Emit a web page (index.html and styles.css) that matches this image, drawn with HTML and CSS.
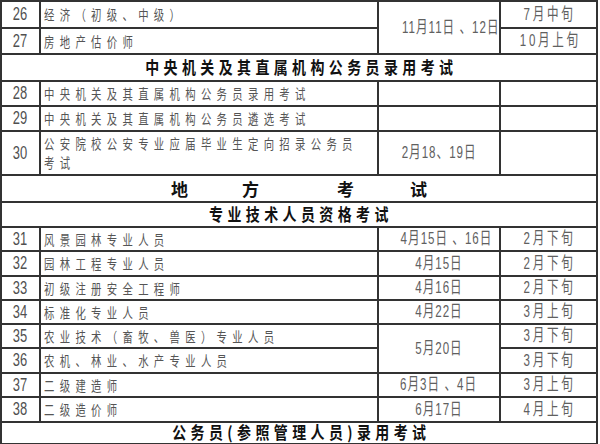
FILE: index.html
```html
<!DOCTYPE html>
<html lang="zh">
<head>
<meta charset="utf-8">
<link rel="stylesheet" href="styles.css">
</head>
<body>
<table class="sched">
<colgroup><col class="c1"><col class="c2"><col class="c3"><col class="c4"></colgroup>
<tbody>
<tr class="h27"><td class="num"><span class="n">26</span></td><td class="name"><span class="t">经济（初级、中级）</span></td><td class="date" rowspan="2"><span class="d">11月11日 、12日</span></td><td class="reg"><span class="d r">7月中旬</span></td></tr>
<tr class="h26"><td class="num"><span class="n">27</span></td><td class="name"><span class="t">房地产估价师</span></td><td class="reg"><span class="d r">10月上旬</span></td></tr>
<tr class="h27"><td class="head" colspan="4"><span class="b">中央机关及其直属机构公务员录用考试</span></td></tr>
<tr class="h25"><td class="num"><span class="n">28</span></td><td class="name"><span class="t">中央机关及其直属机构公务员录用考试</span></td><td class="date"></td><td class="reg"></td></tr>
<tr class="h25"><td class="num"><span class="n">29</span></td><td class="name"><span class="t">中央机关及其直属机构公务员遴选考试</span></td><td class="date"></td><td class="reg"></td></tr>
<tr class="h44"><td class="num"><span class="n">30</span></td><td class="name"><span class="t two">公安院校公安专业应届毕业生定向招录公务员<br>考试</span></td><td class="date"><span class="d">2月18、19日</span></td><td class="reg"></td></tr>
<tr class="h27"><td class="head" colspan="4"><div class="spread"><span>地</span><span>方</span><span>考</span><span>试</span></div></td></tr>
<tr class="h25"><td class="head" colspan="4"><span class="b">专业技术人员资格考试</span></td></tr>
<tr class="h24"><td class="num"><span class="n">31</span></td><td class="name"><span class="t">风景园林专业人员</span></td><td class="date"><span class="d">4月15日 、16日</span></td><td class="reg"><span class="d r">2月下旬</span></td></tr>
<tr class="h25"><td class="num"><span class="n">32</span></td><td class="name"><span class="t">园林工程专业人员</span></td><td class="date"><span class="d">4月15日</span></td><td class="reg"><span class="d r">2月下旬</span></td></tr>
<tr class="h24"><td class="num"><span class="n">33</span></td><td class="name"><span class="t">初级注册安全工程师</span></td><td class="date"><span class="d">4月16日</span></td><td class="reg"><span class="d r">2月下旬</span></td></tr>
<tr class="h24"><td class="num"><span class="n">34</span></td><td class="name"><span class="t">标准化专业人员</span></td><td class="date"><span class="d">4月22日</span></td><td class="reg"><span class="d r">3月上旬</span></td></tr>
<tr class="h24"><td class="num"><span class="n">35</span></td><td class="name"><span class="t">农业技术（畜牧、兽医）专业人员</span></td><td class="date" rowspan="2"><span class="d">5月20日</span></td><td class="reg"><span class="d r">3月下旬</span></td></tr>
<tr class="h25"><td class="num"><span class="n">36</span></td><td class="name"><span class="t">农机、林业、水产专业人员</span></td><td class="reg"><span class="d r">3月下旬</span></td></tr>
<tr class="h24"><td class="num"><span class="n">37</span></td><td class="name"><span class="t">二级建造师</span></td><td class="date"><span class="d">6月3日 、4日</span></td><td class="reg"><span class="d r">3月上旬</span></td></tr>
<tr class="h25"><td class="num"><span class="n">38</span></td><td class="name"><span class="t">二级造价师</span></td><td class="date"><span class="d">6月17日</span></td><td class="reg"><span class="d r">4月上旬</span></td></tr>
<tr class="h21"><td class="head" colspan="4"><span class="b">公务员(参照管理人员)录用考试</span></td></tr>
</tbody>
</table>
</body>
</html>
```
FILE: styles.css
```css
html, body {
  margin: 0;
  padding: 0;
  background: #fff;
}
body {
  width: 600px;
  height: 444px;
  overflow: hidden;
  font-family: "Liberation Sans", "Noto Sans CJK SC", sans-serif;
}
.sched {
  border-collapse: collapse;
  table-layout: fixed;
  width: 597px;
}
.c1 { width: 39px; }
.c2 { width: 338px; }
.c3 { width: 122px; }
.c4 { width: 97px; }
.sched td {
  border: 2px solid #333;
  padding: 0;
  vertical-align: middle;
  white-space: nowrap;
  overflow: hidden;
}
.h21 { height: 21px; }
.h24 { height: 24px; }
.h25 { height: 25px; }
.h26 { height: 26px; }
.h27 { height: 27px; }
.h44 { height: 44px; }
.num { text-align: center; }
.n {
  display: inline-block;
  font-size: 18px;
  line-height: 18px;
  color: #505050;
  transform: scaleX(.72);
}
.name { padding-left: 3px !important; }
.t {
  display: inline-block;
  font-family: "Noto Sans CJK SC", sans-serif;
  font-size: 14px;
  line-height: 19px;
  letter-spacing: 7.2px;
  color: #555;
  transform: scaleX(.74);
  transform-origin: left center;
}
.date, .reg { text-align: center; }
.d {
  display: inline-block;
  font-size: 17px;
  line-height: 18px;
  letter-spacing: 1.5px;
  color: #606060;
  transform: scaleX(.68);
}
.d.r { letter-spacing: 4px; padding-left: 4px; }
.head { text-align: center; }
.b {
  display: inline-block;
  font-family: "Noto Sans CJK SC", sans-serif;
  font-weight: 700;
  font-size: 17px;
  line-height: 18px;
  letter-spacing: 5.4px;
  padding-left: 5.4px;
  color: #111;
  transform: scaleX(.82);
}
.spread {
  display: flex;
  justify-content: center;
  font-family: "Noto Sans CJK SC", sans-serif;
  font-weight: 700;
  font-size: 17px;
  line-height: 20px;
  color: #111;
}
.spread span:nth-child(2) { margin-left: 54px; }
.spread span:nth-child(3) { margin-left: 78px; }
.spread span:nth-child(4) { margin-left: 56px; }
```
